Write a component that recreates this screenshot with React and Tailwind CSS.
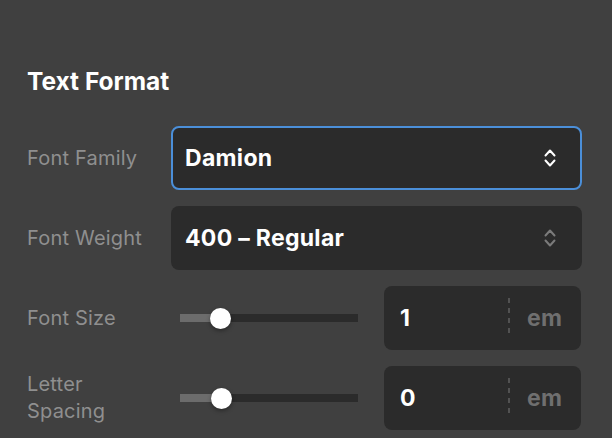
import React from 'react';

function Chevrons({ className }) {
  return (
    <svg width="12" height="24" viewBox="0 0 12 24" fill="none" className={className}>
      <polyline points="1.5,9.5 6,4.5 10.5,9.5" stroke="currentColor" strokeWidth="2" strokeLinecap="round" strokeLinejoin="round" />
      <polyline points="1.5,14.5 6,19.5 10.5,14.5" stroke="currentColor" strokeWidth="2" strokeLinecap="round" strokeLinejoin="round" />
    </svg>
  );
}

function Label({ children }) {
  return (
    <div className="w-[144px] shrink-0 text-[20px] leading-[27px] tracking-[0.2px] text-[#8f8f8f]">
      {children}
    </div>
  );
}

function Select({ value, focused }) {
  return (
    <div
      className={`flex-1 h-16 rounded-lg bg-[#2b2b2b] flex items-center justify-between pl-3 pr-[24px] ${
        focused ? 'border-2 border-[#4b8fd9]' : 'border-2 border-transparent'
      }`}
    >
      <span className="text-[23px] tracking-[0.3px] font-bold text-white">{value}</span>
      <Chevrons className={focused ? 'text-white' : 'text-[#7b7b7b]'} />
    </div>
  );
}

function Slider({ fill }) {
  return (
    <div className="w-[213px] shrink-0 pl-[9px] pr-[26px]">
      <div className="relative h-[8px] bg-[#2b2b2b]">
        <div className="h-full bg-[#6c6c6c]" style={{ width: fill }} />
        <div
          className="absolute top-1/2 w-[21px] h-[21px] -mt-[10.5px] -ml-[10.5px] rounded-full bg-white shadow-[0_2px_4px_rgba(0,0,0,0.35)]"
          style={{ left: fill }}
        />
      </div>
    </div>
  );
}

function UnitInput({ value }) {
  return (
    <div className="w-[197px] h-16 rounded-lg bg-[#2b2b2b] flex items-center">
      <span className="w-[124px] pl-4 text-[23px] font-bold text-white">{value}</span>
      <div className="w-[2px] h-[40px] bg-[repeating-linear-gradient(to_bottom,#525252_0_5px,transparent_5px_10px)]" />
      <span className="pl-[17px] text-[23px] tracking-[0.3px] font-bold text-[#6f6f6f]">em</span>
    </div>
  );
}

export default function App() {
  return (
    <div className="w-[612px] h-[438px] overflow-hidden bg-[#404040] pl-[27px] pr-[30px] pt-[65px] font-['Inter',sans-serif]">
      <h2 className="text-[24.5px] leading-8 font-bold text-white mb-[29px]">Text Format</h2>

      <div className="flex flex-col gap-4">
        <div className="flex items-center">
          <Label>Font Family</Label>
          <Select value="Damion" focused />
        </div>

        <div className="flex items-center">
          <Label>Font Weight</Label>
          <Select value="400 – Regular" />
        </div>

        <div className="flex items-center">
          <Label>Font Size</Label>
          <Slider fill={40} />
          <UnitInput value="1" />
        </div>

        <div className="flex items-center">
          <Label>
            Letter
            <br />
            Spacing
          </Label>
          <Slider fill={41} />
          <UnitInput value="0" />
        </div>
      </div>
    </div>
  );
}
